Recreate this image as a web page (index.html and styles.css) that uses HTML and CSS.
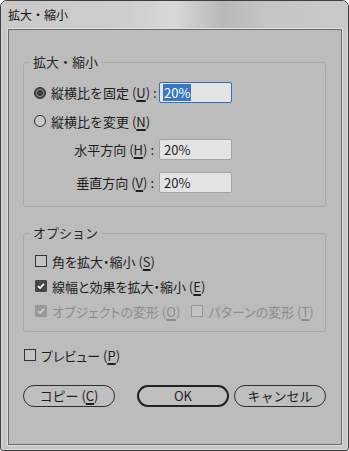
FILE: index.html
```html
<!DOCTYPE html>
<html lang="ja">
<head>
    <meta charset="UTF-8">
    <meta name="viewport" content="width=device-width, initial-scale=1.0">
    <title>拡大・縮小</title>
    <link rel="stylesheet" href="styles.css">
</head>
<body>
    <div class="window">
        <div class="titlebar">拡大・縮小</div>

        <div class="panel">
            <fieldset class="group scale">
                <legend>拡大・縮小</legend>
                <div class="scaleGrid">
                    <label class="option"><span class="radio on"></span>縦横比を固定 (<u>U</u>) :</label>
                    <div class="field focus"><span class="sel">20%</span></div>

                    <label class="option wide"><span class="radio"></span>縦横比を変更 (<u>N</u>)</label>

                    <label class="sub">水平方向 (<u>H</u>) :</label>
                    <div class="field">20%</div>

                    <label class="sub last">垂直方向 (<u>V</u>) :</label>
                    <div class="field last">20%</div>
                </div>
            </fieldset>

            <fieldset class="group options">
                <legend>オプション</legend>
                <label class="check-row"><span class="check"></span>角を拡大・縮小 (<u>S</u>)</label>
                <label class="check-row"><span class="check on"><svg viewBox="0 0 11 11"><path d="M2.3 5.6 L4.5 7.8 L8.7 3.2" /></svg></span>線幅と効果を拡大・縮小 (<u>E</u>)</label>
                <div class="check-row disabled">
                    <label class="check-item"><span class="check on"><svg viewBox="0 0 11 11"><path d="M2.3 5.6 L4.5 7.8 L8.7 3.2" /></svg></span>オブジェクトの変形 (<u>O</u>)</label>
                    <label class="check-item second"><span class="check"></span>パターンの変形 (<u>T</u>)</label>
                </div>
            </fieldset>

            <label class="check-row preview"><span class="check"></span>プレビュー (<u>P</u>)</label>

            <div class="buttons">
                <button class="btn copy">コピー (<u>C</u>)</button>
                <button class="btn ok">OK</button>
                <button class="btn cancel">キャンセル</button>
            </div>
        </div>
    </div>
</body>
</html>
```

FILE: styles.css
```css
*{
    padding: 0px;
    margin: 0px;
    box-sizing: border-box;
}
body{
    background-color: #ffffff;
    font-family: "Noto Sans CJK JP", "Noto Sans", sans-serif;
    font-size: 13px;
    color: #1e1e1e;
}
u{
    text-underline-offset: 2px;
    text-decoration-thickness: 1.5px;
}
.window{
    width: 349px;
    height: 451px;
    border: 1px solid #3e3e3e;
    border-radius: 7px 7px 3px 3px;
    background-color: #c7c7c7;
    display: flex;
    flex-direction: column;
    box-shadow: inset 0 0 0 1px #dadada;
}
.titlebar{
    height: 28px;
    line-height: 28px;
    padding-left: 7px;
    font-size: 12px;
    color: #151515;
    border-radius: 6px 6px 0 0;
    background: linear-gradient(to right, #c9c9c9 0%, #cdcdcd 35%, #d8d8d8 50%, #b8b8b8 64%, #c4c4c4 75%, #cacaca 100%);
}
.panel{
    flex: 1;
    margin: 0 6px 5px 7px;
    border: 1px solid #6c6c6c;
    background-color: #bcbcbc;
    box-shadow: 0 0 0 1px #dedede;
}

/* group boxes */
.group{
    border: 1px solid #a9a9a9;
    border-radius: 3px;
    margin: 0 15px 0 14px;
}
.group legend{
    margin-left: -4px;
    padding: 0 3px;
    line-height: 18px;
    color: #262626;
}
.options legend{
    margin-left: -5px;
}
.scale{
    margin-top: 23px;
    padding: 11px 10px 13px 10px;
}
.options{
    margin-top: 17px;
    padding: 10px 10px 11px 11px;
}
.options .check-row,
.preview{
    font-feature-settings: "palt";
}

.scaleGrid{
    display: grid;
    grid-template-columns: 122px 73px;
    column-gap: 3px;
    row-gap: 7.5px;
}
.option{
    display: flex;
    align-items: center;
    height: 21px;
    white-space: nowrap;
}
.option.wide{
    grid-column: 1 / 3;
}
.sub{
    justify-self: end;
    height: 21px;
    line-height: 21px;
    padding-right: 2px;
    white-space: nowrap;
}
.last{
    margin-top: 4.5px;
}
.field{
    height: 21px;
    border: 1px solid #a3a3a3;
    border-radius: 2px;
    background-color: #e3e3e3;
    padding-left: 4px;
    line-height: 19px;
}
.field.focus{
    border-color: #3b6db3;
    padding-left: 3px;
}
.sel{
    display: inline-block;
    background-color: #3a76c4;
    color: #ffffff;
    line-height: 17px;
    padding: 0 1px;
}

.radio{
    width: 12px;
    height: 12px;
    border-radius: 50%;
    border: 1px solid #2e2e2e;
    background-color: #c8c8c8;
    margin-right: 5px;
    flex-shrink: 0;
}
.radio.on{
    background: radial-gradient(circle, #3a3a3a 0 2.6px, #8a8a8a 3.2px 3.6px, #4a4a4a 4px);
}

/* check boxes */
.check-row{
    display: flex;
    align-items: center;
    height: 18px;
    white-space: nowrap;
}
.options .check-row + .check-row{
    margin-top: 7px;
}
.check{
    width: 12px;
    height: 12px;
    border: 1px solid #333333;
    background-color: #c3c3c3;
    margin-right: 5px;
    flex-shrink: 0;
    display: flex;
}
.check.on{
    background-color: #474747;
    border-color: #474747;
    border-radius: 1px;
}
.check svg{
    width: 10px;
    height: 10px;
}
.check svg path{
    fill: none;
    stroke: #ffffff;
    stroke-width: 1.8;
}
.check-item{
    display: flex;
    align-items: center;
}
.check-item.second{
    margin-left: 11px;
}
.disabled{
    color: #8c8c8c;
}
.disabled .check{
    border-color: #969696;
}
.disabled .check.on{
    background-color: #999999;
    border-color: #999999;
}
.disabled .check svg path{
    stroke: #cfcfcf;
}
.preview{
    margin: 14px 0 0 15px;
}

/* buttons */
.buttons{
    display: flex;
    margin-top: 21px;
    padding-left: 14px;
}
.btn{
    width: 92px;
    height: 22px;
    border: 1px solid #2f2f2f;
    border-radius: 11px;
    background-color: #bfbfbf;
    font-family: inherit;
    font-size: 13px;
    color: #1e1e1e;
    line-height: 18px;
}
.btn.ok{
    margin-left: 22px;
    border: 2px solid #222222;
}
.btn.cancel{
    margin-left: 5px;
}
```
